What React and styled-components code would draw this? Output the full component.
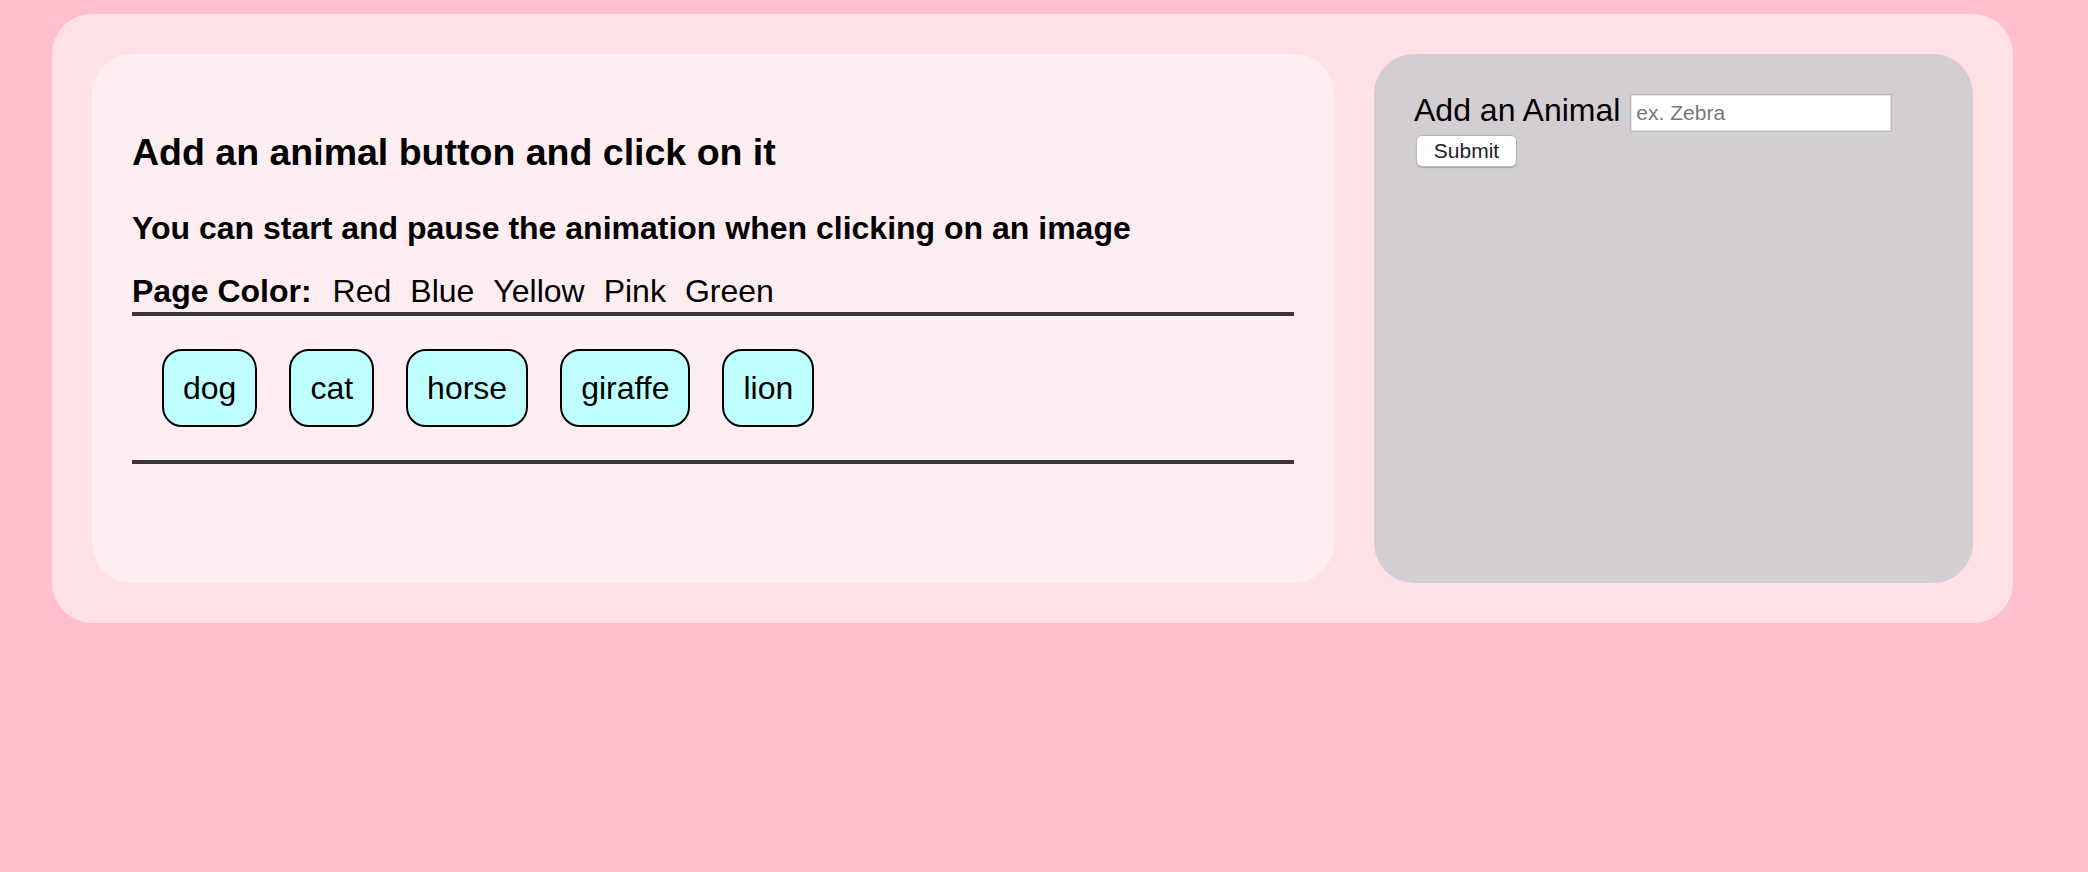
import styled, { createGlobalStyle } from "styled-components";

const GlobalStyle = createGlobalStyle`
  html, body {
    margin: 0;
    padding: 0;
    background-color: #ffc0cb;
    font-family: "Liberation Sans", Arial, Helvetica, sans-serif;
    color: #000;
  }
`;

const animals = ["dog", "cat", "horse", "giraffe", "lion"];
const colors = ["Red", "Blue", "Yellow", "Pink", "Green"];

const Page = styled.div`
  min-height: 872px;
  padding: 14px 0 0 52px;
  box-sizing: border-box;
`;

const Frame = styled.main`
  width: 1961px;
  box-sizing: border-box;
  padding: 40px;
  display: grid;
  grid-template-columns: 1242px 599px;
  column-gap: 40px;
  background-color: #ffe1e6;
  border-radius: 40px;
`;

const Card = styled.section`
  height: 529px;
  box-sizing: border-box;
  border-radius: 40px;
  background-color: ${({ $tone }) => ($tone === "gray" ? "#d3ced2" : "#ffeef1")};
  padding: ${({ $tone }) => ($tone === "gray" ? "38px 40px" : "40px")};
  display: flex;
  flex-direction: column;
`;

const Title = styled.h1`
  margin: 37px 0 0;
  font-size: 37.5px;
  line-height: 43px;
  font-weight: 700;
`;

const Subtitle = styled.h2`
  margin: 36px 0 0;
  font-size: 32px;
  line-height: 37px;
  font-weight: 700;
`;

const ColorBar = styled.div`
  margin-top: 26px;
  padding-bottom: 2px;
  display: flex;
  align-items: baseline;
  column-gap: 19px;
  font-size: 32px;
  line-height: 37px;
  border-bottom: 4px solid #3a3636;
`;

const ColorLabel = styled.span`
  font-weight: 700;
  margin-right: 2px;
`;

const ColorOption = styled.span`
  cursor: pointer;
`;

const AnimalRow = styled.div`
  display: flex;
  column-gap: 32px;
  padding: 33px 0 33px 30px;
  border-bottom: 4px solid #3a3636;
`;

const AnimalButton = styled.button`
  height: 78px;
  box-sizing: border-box;
  padding: 0 19px;
  display: flex;
  align-items: center;
  justify-content: center;
  font-family: "Liberation Sans", Arial, Helvetica, sans-serif;
  font-size: 32px;
  color: #000;
  background-color: #c0ffff;
  border: 2px solid #000;
  border-radius: 20px;
  cursor: pointer;
`;

const AddForm = styled.form`
  display: flex;
  flex-direction: column;
  align-items: flex-start;
`;

const AddRow = styled.div`
  display: flex;
  align-items: flex-start;
  column-gap: 10px;
`;

const AddLabel = styled.label`
  font-size: 32px;
  line-height: 37px;
`;

const AnimalInput = styled.input`
  margin-top: 2px;
  width: 262px;
  height: 38px;
  box-sizing: border-box;
  padding: 0 5px;
  font-family: "Liberation Sans", Arial, Helvetica, sans-serif;
  font-size: 21px;
  background-color: #fff;
  border: 1px solid #b8b8b8;
  box-shadow: inset 0 0 0 1px #e2e2e2;
  outline: none;

  &::placeholder {
    color: #777;
  }
`;

const SubmitButton = styled.button`
  margin: 3px 0 0 2px;
  width: 101px;
  height: 32px;
  box-sizing: border-box;
  padding: 0;
  font-family: "Liberation Sans", Arial, Helvetica, sans-serif;
  font-size: 21px;
  color: #1e1e1e;
  background-color: #fff;
  border: 1px solid #b9b5b8;
  border-radius: 6px;
  box-shadow: 0 1px 1px rgba(0, 0, 0, 0.2);
  cursor: pointer;
`;

export default function App() {
  return (
    <>
      <GlobalStyle />
      <Page>
        <Frame>
          <Card>
            <Title>Add an animal button and click on it</Title>
            <Subtitle>
              You can start and pause the animation when clicking on an image
            </Subtitle>
            <ColorBar>
              <ColorLabel>Page Color:</ColorLabel>
              {colors.map((c) => (
                <ColorOption key={c}>{c}</ColorOption>
              ))}
            </ColorBar>
            <AnimalRow>
              {animals.map((a) => (
                <AnimalButton key={a} type="button">
                  {a}
                </AnimalButton>
              ))}
            </AnimalRow>
          </Card>
          <Card $tone="gray">
            <AddForm onSubmit={(e) => e.preventDefault()}>
              <AddRow>
                <AddLabel htmlFor="animal">Add an Animal</AddLabel>
                <AnimalInput id="animal" placeholder="ex. Zebra" />
              </AddRow>
              <SubmitButton type="submit">Submit</SubmitButton>
            </AddForm>
          </Card>
        </Frame>
      </Page>
    </>
  );
}
